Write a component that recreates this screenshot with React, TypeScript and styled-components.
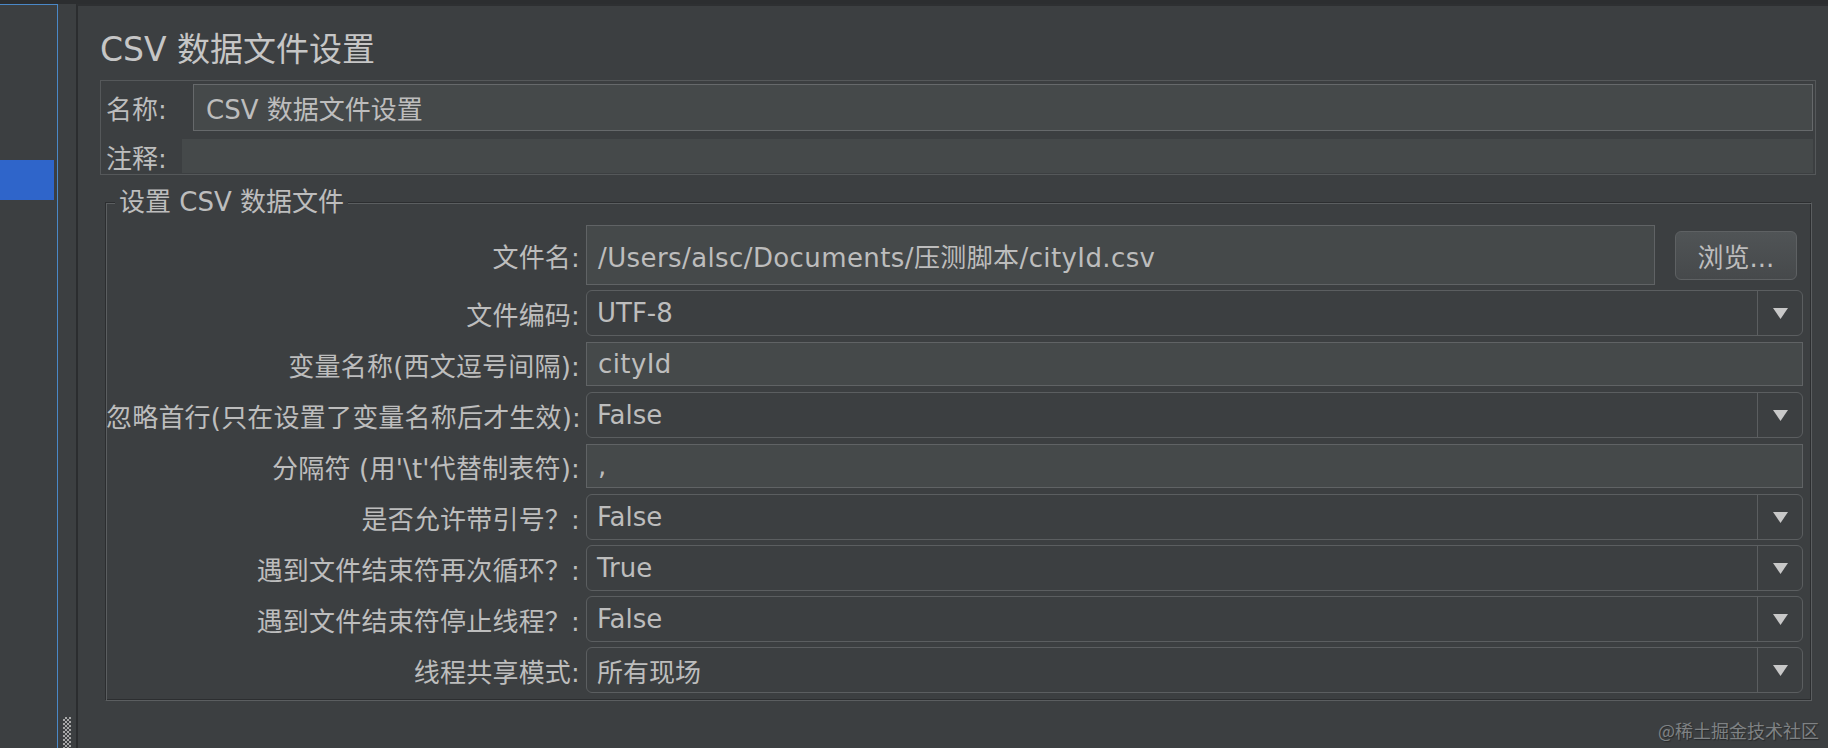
import React from "react";
import styled, { createGlobalStyle } from "styled-components";

const FONT = `"DejaVu Sans", "Noto Sans CJK SC", sans-serif`;

const GlobalStyle = createGlobalStyle`
  html, body { margin: 0; padding: 0; background: #3c3f41; }
  body {
    width: 1828px;
    height: 748px;
    overflow: hidden;
    font-family: ${FONT};
    color: #bdbdbd;
  }
  #root { height: 100%; }
`;

const Window = styled.div`
  position: relative;
  display: flex;
  width: 1828px;
  height: 748px;
  box-sizing: border-box;
  border-top: 4px solid #2c2e30;
  background: #3c3f41;
`;

const TreePanel = styled.div`
  flex: none;
  width: 58px;
  box-sizing: border-box;
  border-top: 1px solid #4a88c7;
  border-right: 1px solid #4a88c7;
  padding-top: 155px;
`;

const SelectedRow = styled.div`
  width: 54px;
  height: 40px;
  background: #2f65ca;
`;

const Splitter = styled.div`
  flex: none;
  width: 18px;
  box-sizing: border-box;
  display: flex;
  flex-direction: column;
  justify-content: flex-end;
  padding-left: 5px;
`;

const Grip = styled.div`
  width: 8px;
  height: 31px;
  background: repeating-conic-gradient(#a8a8a8 0% 25%, transparent 0% 50%) 0 0 / 4px 4px;
`;

const EditorPanel = styled.div`
  flex: 1;
  min-width: 0;
  box-sizing: border-box;
  border-left: 2px solid #2b2d2f;
  border-top: 2px solid #2e3032;
  padding: 24px 12px 0 22px;
  display: flex;
  flex-direction: column;
`;

const Title = styled.h1`
  margin: 0;
  font-size: 33px;
  line-height: 40px;
  font-weight: normal;
  color: #c6c6c6;
  white-space: nowrap;
`;

const InfoBox = styled.div`
  margin-top: 10px;
  border: 1px solid #55585a;
  padding: 3px 2px 1px 5px;
  display: flex;
  flex-direction: column;
  gap: 8px;
`;

const InfoRow = styled.div<{ $h: number }>`
  display: flex;
  align-items: center;
  height: ${(p) => p.$h}px;
`;

const InfoLabel = styled.span`
  flex: none;
  width: 76px;
  font-size: 26px;
  white-space: nowrap;
`;

const NameInput = styled.div`
  flex: 1;
  height: 100%;
  box-sizing: border-box;
  margin-left: 11px;
  border: 1px solid #66696b;
  background: #45494a;
  padding-left: 12px;
  display: flex;
  align-items: center;
  font-size: 26px;
  white-space: nowrap;
`;

const CommentInput = styled.div`
  flex: 1;
  height: 100%;
  background: #45494a;
`;

const Group = styled.fieldset`
  margin: 12px 4px 0 5px;
  padding: 8px 8px 7px 0;
  min-width: 0;
  border: 1px solid;
  border-color: #2c2e30 #5b5e60 #5b5e60 #2c2e30;
  box-shadow: inset 1px 1px 0 #5b5e60, inset -1px -1px 0 #2c2e30;
`;

const GroupTitle = styled.legend`
  margin-left: 9px;
  padding: 0 4px;
  font-size: 26px;
  line-height: 30px;
  background: #3c3f41;
  white-space: nowrap;
`;

const Rows = styled.div`
  display: flex;
  flex-direction: column;
  gap: 5px;
`;

const FieldRow = styled.div<{ $h: number }>`
  display: grid;
  grid-template-columns: 474px 1fr;
  column-gap: 6px;
  align-items: center;
  height: ${(p) => p.$h}px;
`;

const FieldLabel = styled.label`
  text-align: right;
  font-size: 26px;
  letter-spacing: 0.2px;
  white-space: nowrap;
`;

const FileCell = styled.div`
  display: flex;
  align-items: center;
  height: 100%;
`;

const TextField = styled.div<{ $h: number }>`
  flex: 1;
  min-width: 0;
  height: ${(p) => p.$h}px;
  box-sizing: border-box;
  border: 1px solid #606365;
  background: #45494a;
  padding: 0 11px;
  display: flex;
  align-items: center;
  font-size: 26px;
  letter-spacing: 0.4px;
  white-space: nowrap;
  overflow: hidden;
`;

const BrowseButton = styled.button`
  flex: none;
  width: 122px;
  height: 49px;
  margin: 0 6px 0 20px;
  box-sizing: border-box;
  border: 1px solid #5e6163;
  border-radius: 6px;
  background: linear-gradient(#505456, #46494b);
  color: #bdbdbd;
  font-family: ${FONT};
  font-size: 26px;
  padding: 0;
`;

const Combo = styled.div`
  display: flex;
  height: 46px;
  box-sizing: border-box;
  border: 1px solid #5b5e60;
  border-radius: 6px;
  background: #3c3f41;
`;

const ComboValue = styled.div`
  flex: 1;
  display: flex;
  align-items: center;
  padding-left: 10px;
  font-size: 26px;
  white-space: nowrap;
`;

const ComboArrow = styled.div`
  flex: none;
  width: 44px;
  border-left: 1px solid #5b5e60;
  display: flex;
  align-items: center;
  justify-content: center;
`;

const Watermark = styled.div`
  position: absolute;
  right: 9px;
  bottom: 7px;
  font-family: "Noto Sans CJK SC", sans-serif;
  font-size: 18px;
  line-height: 22px;
  color: #7f8284;
  text-shadow: 1px 1px 1px rgba(0, 0, 0, 0.35);
`;

const Arrow = () => (
  <svg width="15" height="11" viewBox="0 0 15 11">
    <polygon points="0,0 15,0 7.5,11" fill="#c8c8c8" />
  </svg>
);

type Row =
  | { label: string; kind: "text"; value: string }
  | { label: string; kind: "combo"; value: string };

const rows: Row[] = [
  { label: "文件编码:", kind: "combo", value: "UTF-8" },
  { label: "变量名称(西文逗号间隔):", kind: "text", value: "cityId" },
  { label: "忽略首行(只在设置了变量名称后才生效):", kind: "combo", value: "False" },
  { label: "分隔符 (用'\\t'代替制表符):", kind: "text", value: "," },
  { label: "是否允许带引号？:", kind: "combo", value: "False" },
  { label: "遇到文件结束符再次循环？:", kind: "combo", value: "True" },
  { label: "遇到文件结束符停止线程？:", kind: "combo", value: "False" },
  { label: "线程共享模式:", kind: "combo", value: "所有现场" },
];

export default function App() {
  return (
    <>
      <GlobalStyle />
      <Window>
        <TreePanel>
          <SelectedRow />
        </TreePanel>
        <Splitter>
          <Grip />
        </Splitter>
        <EditorPanel>
          <Title>CSV 数据文件设置</Title>
          <InfoBox>
            <InfoRow $h={47}>
              <InfoLabel>名称:</InfoLabel>
              <NameInput>CSV 数据文件设置</NameInput>
            </InfoRow>
            <InfoRow $h={34}>
              <InfoLabel>注释:</InfoLabel>
              <CommentInput />
            </InfoRow>
          </InfoBox>
          <Group>
            <GroupTitle>设置 CSV 数据文件</GroupTitle>
            <Rows>
              <FieldRow $h={60}>
                <FieldLabel>文件名:</FieldLabel>
                <FileCell>
                  <TextField $h={60}>/Users/alsc/Documents/压测脚本/cityId.csv</TextField>
                  <BrowseButton>浏览...</BrowseButton>
                </FileCell>
              </FieldRow>
              {rows.map((r) => (
                <FieldRow $h={46} key={r.label}>
                  <FieldLabel>{r.label}</FieldLabel>
                  {r.kind === "text" ? (
                    <TextField $h={44}>{r.value}</TextField>
                  ) : (
                    <Combo>
                      <ComboValue>{r.value}</ComboValue>
                      <ComboArrow>
                        <Arrow />
                      </ComboArrow>
                    </Combo>
                  )}
                </FieldRow>
              ))}
            </Rows>
          </Group>
        </EditorPanel>
        <Watermark>@稀土掘金技术社区</Watermark>
      </Window>
    </>
  );
}
